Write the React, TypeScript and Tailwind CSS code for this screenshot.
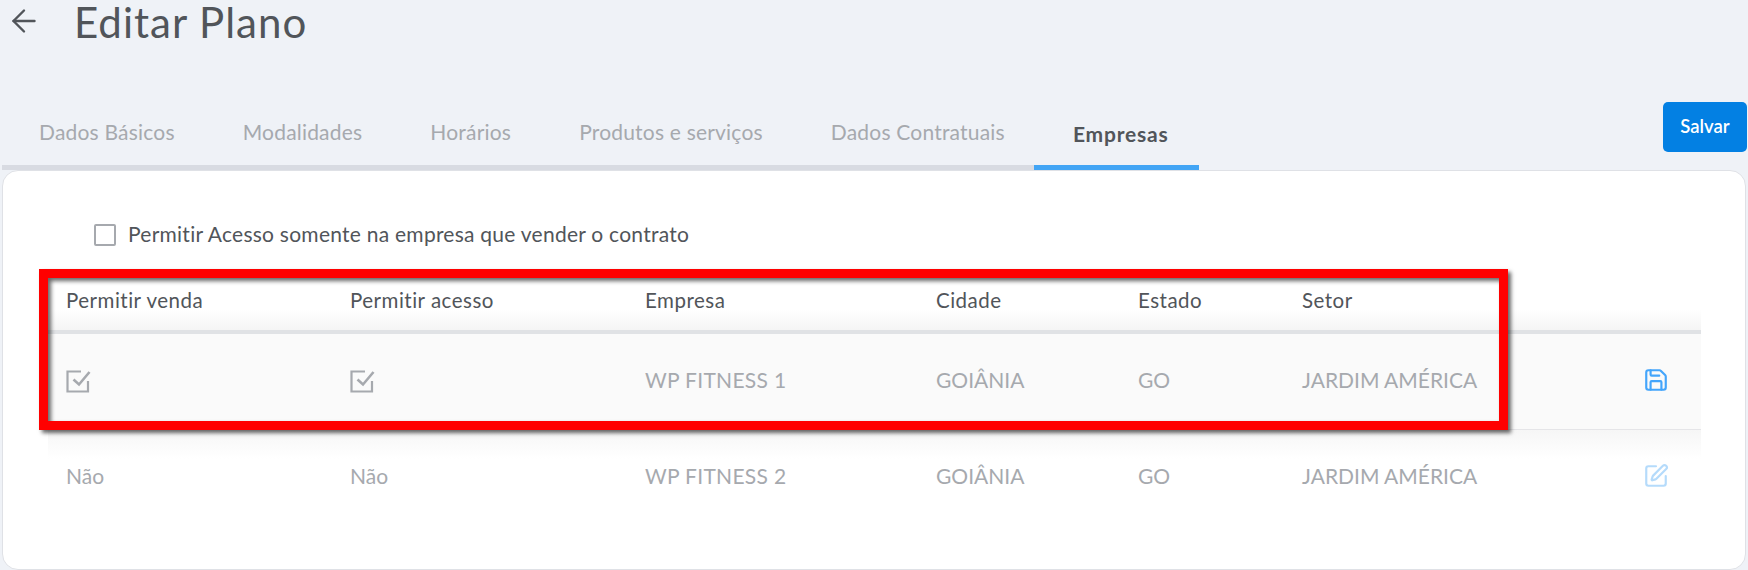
import { ArrowLeft, Save, SquarePen } from 'lucide-react';

const tabs = ['Dados Básicos', 'Modalidades', 'Horários', 'Produtos e serviços', 'Dados Contratuais'];
const gridCols = 'grid grid-cols-[284px_295px_291px_202px_164px_1fr] items-center';

function CheckedIcon() {
  return (
    <svg width="25" height="23" viewBox="0 0 25 23" fill="none" stroke="#a6a9ae" strokeWidth="2.2">
      <path d="M15 1.5H1.5V21.5H22V11" />
      <path d="M7.5 9.5L13 14.5L23.5 2" strokeWidth="2.6" />
    </svg>
  );
}

export default function App() {
  return (
    <div className="w-[1748px] h-[570px] overflow-hidden bg-[#eff2f7] flex flex-col font-['Lato',sans-serif]">
      {/* Titulo */}
      <div className="h-[44px] flex items-center shrink-0">
        <ArrowLeft className="ml-[6px] -mt-[2px] text-[#51555a]" size={36} strokeWidth={1.6} />
        <h1 className="ml-[32px] text-[42px] leading-[44px] tracking-[1px] text-[#51555a]">Editar Plano</h1>
      </div>

      {/* Abas */}
      <div className="flex items-end justify-between h-[126px] shrink-0 pl-[2px] pr-[1px]">
        <div className="flex border-b-[5px] border-[#d8dbe2]">
          {tabs.map((tab, i) => (
            <div key={tab} className={`h-[62px] pt-[5px] flex items-center text-[21px] tracking-[0.2px] text-[#a6a9ae] ${i === 0 ? 'pl-[37px] pr-[34px]' : 'px-[34px]'}`}>
              {tab}
            </div>
          ))}
          <div className="h-[62px] pt-[5px] -mb-[5px] ml-[-5px] box-content border-b-[5px] border-[#42a5f5] flex items-center pl-[39px] pr-[30px] text-[21px] tracking-[0.8px] font-bold text-[#51555a]">
            Empresas
          </div>
        </div>
        <button className="w-[84px] h-[50px] mb-[18px] bg-[#0380e3] rounded-[5px] text-white text-[18.5px] font-semibold">
          Salvar
        </button>
      </div>

      {/* Card */}
      <div className="relative flex-1 mx-[2px] bg-white border border-[#dfe1e6] rounded-[16px] pl-[45px] pr-[44px]">
        <label className="flex items-center mt-[53px] ml-[46px] h-[22px] text-[21px] tracking-[0.25px] text-[#51555a]">
          <span className="w-[22px] h-[22px] border-2 border-[#a6a9ae] rounded-[2px] bg-white" />
          <span className="ml-[12px] -mt-[2px]">Permitir Acesso somente na empresa que vender o contrato</span>
        </label>

        <div className="mt-[33px]">
          <div className={`${gridCols} h-[55px] pl-[18px] pb-[8px] border-b-4 border-[#e0e2e5] bg-gradient-to-b from-white from-60% to-[#f5f5f5] text-[20.5px] tracking-[0.5px] text-[#51555a]`}>
            <span>Permitir venda</span>
            <span>Permitir acesso</span>
            <span>Empresa</span>
            <span>Cidade</span>
            <span>Estado</span>
            <span>Setor</span>
          </div>
          <div className={`${gridCols} h-[96px] pl-[18px] pb-[4px] bg-[#fafafa] border-b border-[#e5e5e8] text-[21px] text-[#a6a9ae]`}>
            <span className="pt-[4px]"><CheckedIcon /></span>
            <span className="pt-[4px]"><CheckedIcon /></span>
            <span className="tracking-[0.3px]">WP FITNESS 1</span>
            <span>GOIÂNIA</span>
            <span>GO</span>
            <div className="flex items-center justify-between pr-[32px]">
              <span>JARDIM AMÉRICA</span>
              <Save className="text-[#44a5fb]" size={26} strokeWidth={2} />
            </div>
          </div>
          <div className={`${gridCols} h-[96px] pl-[18px] pb-[4px] bg-gradient-to-b from-[#f6f6f6] to-white to-30% text-[21px] text-[#a6a9ae]`}>
            <span>Não</span>
            <span>Não</span>
            <span className="tracking-[0.3px]">WP FITNESS 2</span>
            <span>GOIÂNIA</span>
            <span>GO</span>
            <div className="flex items-center justify-between pr-[32px]">
              <span>JARDIM AMÉRICA</span>
              <SquarePen className="text-[#b5dbfb]" size={26} strokeWidth={2} />
            </div>
          </div>
        </div>

        {/* Destaque vermelho */}
        <div className="absolute left-[36px] top-[98px] w-[1469px] h-[161px] border-[9px] border-[#ff0000] shadow-[3px_3px_4px_rgba(0,0,0,0.6),inset_3px_3px_4px_rgba(0,0,0,0.6)]" />
      </div>
    </div>
  );
}
